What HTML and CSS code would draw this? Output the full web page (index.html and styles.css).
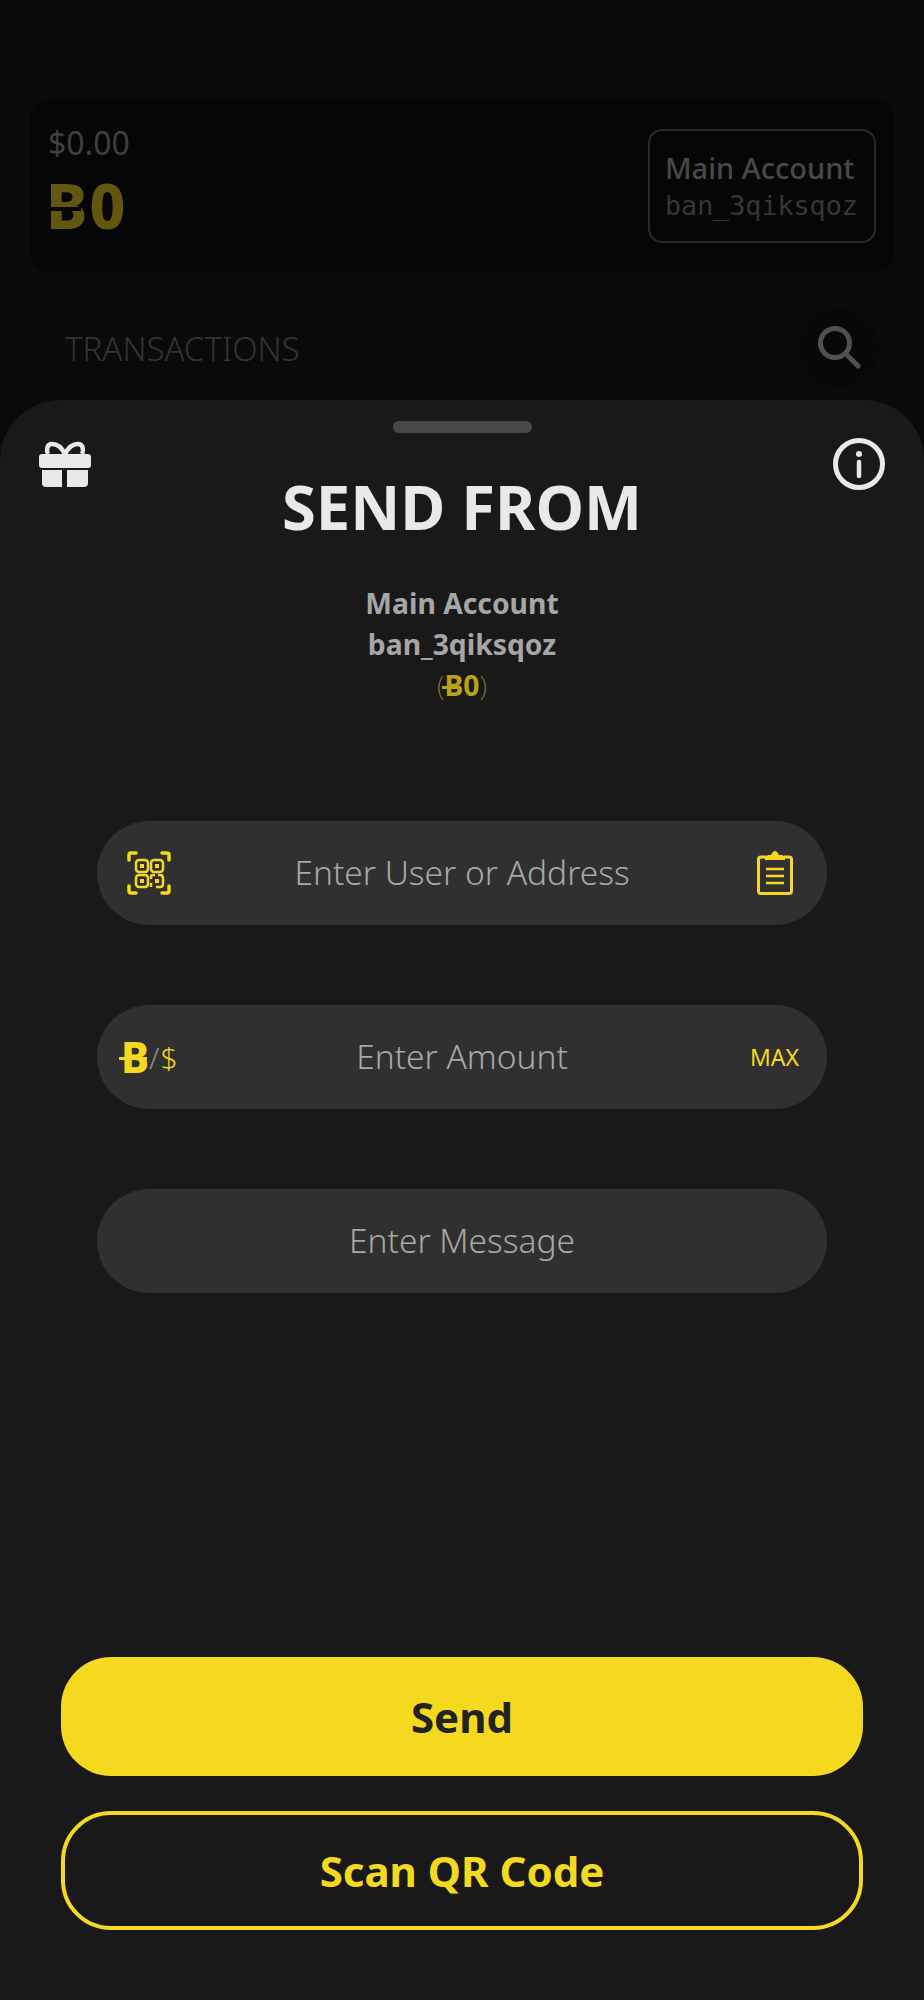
FILE: index.html
```html
<!DOCTYPE html>
<html lang="en">

<head>
    <title>Send</title>
    <meta charset="UTF-8">
    <meta name="viewport" content="width=device-width, initial-scale=1">
    <link rel="stylesheet" href="styles.css">
</head>

<body>
    <div class="home">
        <div class="balance-card">
            <div class="balance">
                <div class="fiat">$0.00</div>
                <div class="crypto"><span class="ban ban-cut">B</span>0</div>
            </div>
            <div class="account-box">
                <div class="account-name">Main Account</div>
                <div class="account-addr">ban_3qiksqoz</div>
            </div>
        </div>
        <div class="tx-header">
            <span class="tx-title">TRANSACTIONS</span>
            <div class="search-btn">
                <svg width="44" height="44" viewBox="0 0 44 44" fill="none" stroke="#505050" stroke-width="5" stroke-linecap="round">
                    <circle cx="18" cy="17" r="14.500"></circle>
                    <path d="M29 28 L41 40"></path>
                </svg>
            </div>
        </div>
    </div>

    <div class="sheet">
        <div class="handle"></div>
        <div class="sheet-head">
            <svg class="gift" width="52" height="48" viewBox="0 0 52 48" fill="#e9e9e9">
                <path d="M26 13 C22 5 17 3 13 3 C8 3 7 9 9 13 M26 13 C30 5 35 3 39 3 C44 3 45 9 43 13" fill="none" stroke="#e9e9e9" stroke-width="4.500"></path>
                <rect x="0" y="13" width="52" height="14" rx="3"></rect>
                <path d="M3 29 H23 V46 H7 Q3 46 3 42 Z"></path>
                <path d="M28 29 H49 V42 Q49 46 45 46 H28 Z"></path>
            </svg>
            <h1 class="sheet-title">SEND FROM</h1>
            <svg class="info" width="52" height="52" viewBox="0 0 52 52" fill="none" stroke="#e9e9e9">
                <circle cx="26" cy="26" r="23.500" stroke-width="5"></circle>
                <circle cx="26" cy="16" r="3" fill="#e9e9e9" stroke="none"></circle>
                <path d="M26 24 V38" stroke-width="4.500" stroke-linecap="round"></path>
            </svg>
        </div>
        <div class="from">
            <div>Main Account</div>
            <div>ban_3qiksqoz</div>
            <div class="from-bal">(<span class="from-amount"><span class="ban ban-line">B</span>0</span>)</div>
        </div>

        <div class="field field-first">
            <svg class="field-icon" width="44" height="44" viewBox="0 0 44 44" fill="none" stroke="#f5d91e" stroke-width="2.500">
                <path d="M2 9 V4 Q2 2 4 2 H9 M35 2 H40 Q42 2 42 4 V9 M42 35 V40 Q42 42 40 42 H35 M9 42 H4 Q2 42 2 40 V35" stroke-width="3.500" stroke-linecap="round"></path>
                <rect x="9" y="9" width="12" height="12" rx="3"></rect>
                <rect x="24" y="9" width="12" height="12" rx="3"></rect>
                <rect x="9" y="24" width="12" height="12" rx="3"></rect>
                <path d="M24 28 V26 Q24 24 26 24 H28 M31 24 H33 Q36 24 36 27 V33 Q36 36 33 36 H29 M24 32 V36"></path>
                <rect x="13" y="13" width="4" height="4" fill="#f5d91e" stroke="none"></rect>
                <rect x="28" y="13" width="4" height="4" fill="#f5d91e" stroke="none"></rect>
                <rect x="13" y="28" width="4" height="4" fill="#f5d91e" stroke="none"></rect>
                <rect x="28" y="28" width="4" height="4" fill="#f5d91e" stroke="none"></rect>
            </svg>
            <span class="placeholder">Enter User or Address</span>
            <svg class="clip-icon" width="36" height="44" viewBox="0 0 36 44" fill="none" stroke="#f5d91e" stroke-width="3">
                <path d="M9 6 H4 Q1.500 6 1.500 8.500 V40 Q1.500 42.500 4 42.500 H32 Q34.500 42.500 34.500 40 V8.500 Q34.500 6 32 6 H27"></path>
                <path d="M8 9 Q8 4 12 4 H14 Q16 0 18 0 Q20 0 22 4 H24 Q28 4 28 9 Z" fill="#f5d91e" stroke="none"></path>
                <path d="M9 18 H27 M9 25 H27 M9 32 H27" stroke-width="2.500"></path>
            </svg>
        </div>

        <div class="field">
            <div class="unit"><span class="ban ban-line unit-ban">B</span><span class="slash">/</span><span class="dollar">$</span></div>
            <span class="placeholder">Enter Amount</span>
            <span class="max">MAX</span>
        </div>

        <div class="field">
            <span class="placeholder">Enter Message</span>
        </div>

        <div class="actions">
            <button class="btn btn-send">Send</button>
            <button class="btn btn-scan">Scan QR Code</button>
        </div>
    </div>
</body>

</html>
```

FILE: styles.css
```css
* {
    padding: 0;
    margin: 0;
    box-sizing: border-box;
}

body {
    width: 924px;
    height: 2000px;
    overflow: hidden;
    background-color: #0a0a0a;
    font-family: "Noto Sans", sans-serif;
}

/* dimmed page behind the sheet */
.home {
    height: 400px;
    padding: 100px 30px 0;
}

.balance-card {
    display: flex;
    justify-content: space-between;
    align-items: flex-start;
    height: 172px;
    padding: 21px 18px 0;
    background-color: #060606;
    border-radius: 20px;
}

.fiat {
    font-size: 32px;
    line-height: 44px;
    color: #3f3f3f;
}

.crypto {
    font-size: 62px;
    line-height: 62px;
    font-weight: 800;
    letter-spacing: 2px;
    color: #635610;
    margin: 9px 0 0 -2px;
}

.ban {
    position: relative;
    display: inline-block;
}

.ban::after {
    content: "";
    position: absolute;
    left: -2px;
    right: 2px;
    top: 50%;
    height: 3px;
}

.ban-cut::after {
    background-color: #060606;
    height: 4px;
    right: 8px;
    left: 0;
    margin-top: 2px;
}

.ban-line::after {
    background-color: currentColor;
}

.account-box {
    width: 228px;
    height: 114px;
    margin-top: 8px;
    padding: 17px 0 0 15px;
    border: 2px solid #2a2a2a;
    border-radius: 14px;
}

.account-name {
    font-size: 29px;
    line-height: 40px;
    font-weight: 500;
    color: #484848;
    white-space: nowrap;
}

.account-addr {
    font-family: "DejaVu Sans Mono", monospace;
    font-size: 26.700px;
    line-height: 36px;
    font-weight: 300;
    color: #363636;
    white-space: nowrap;
}

.tx-header {
    display: flex;
    justify-content: space-between;
    align-items: center;
    height: 80px;
    margin-top: 36px;
    padding: 0 15px 0 35px;
}

.tx-title {
    font-size: 33px;
    font-weight: 300;
    color: #333333;
}

.search-btn {
    display: flex;
    align-items: center;
    justify-content: center;
    width: 80px;
    height: 80px;
    border-radius: 50%;
    background-color: #080808;
}

/* sheet */
.sheet {
    height: 1600px;
    padding-top: 21px;
    background-color: #191919;
    border-radius: 60px 60px 0 0;
}

.handle {
    width: 139px;
    height: 12px;
    margin: 0 auto;
    border-radius: 6px;
    background-color: #474747;
}

.sheet-head {
    display: grid;
    grid-template-columns: 1fr auto 1fr;
    align-items: start;
    padding: 5px 39px 0;
}

.gift {
    justify-self: start;
    margin-top: 3px;
}

.info {
    justify-self: end;
}

.sheet-title {
    margin-top: 27px;
    text-align: center;
    font-size: 61.500px;
    line-height: 82px;
    font-weight: 700;
    color: #e9e9e9;
}

.from {
    margin-top: 36px;
    text-align: center;
    font-size: 28.300px;
    line-height: 41px;
    font-weight: 700;
    color: #a6a6a6;
}

.from-bal {
    font-weight: 200;
    color: #8f7f1a;
}

.from-amount {
    font-weight: 700;
    color: #b8a21a;
}

.field {
    display: grid;
    grid-template-columns: 1fr auto 1fr;
    align-items: center;
    width: 730px;
    height: 104px;
    margin: 80px auto 0;
    padding: 0 24px;
    background-color: #303030;
    border-radius: 52px;
}

.field-first {
    margin-top: 115px;
}

.placeholder {
    grid-column: 2;
    margin-bottom: 3px;
    font-size: 33.500px;
    font-weight: 300;
    color: #a8a8a8;
}

.field-icon {
    margin-left: 6px;
}

.clip-icon {
    justify-self: end;
    margin-right: 10px;
}

.unit {
    display: flex;
    align-items: center;
    color: #f5d91e;
}

.unit-ban {
    font-size: 42px;
    font-weight: 800;
    line-height: 54px;
}

.slash {
    font-size: 30px;
    font-weight: 300;
    color: #8a8a8a;
}

.dollar {
    font-size: 30px;
    font-weight: 300;
    margin-left: 1px;
}

.max {
    justify-self: end;
    margin-right: 4px;
    font-size: 23px;
    line-height: 32px;
    color: #f5d91e;
}

.actions {
    display: flex;
    flex-direction: column;
    gap: 35px;
    margin: 364px 61px 0;
}

.btn {
    height: 119px;
    border-radius: 50px;
    font-family: "Noto Sans", sans-serif;
    font-size: 42px;
    font-weight: 700;
}

.btn-send {
    background-color: #f5d91e;
    border: none;
    color: #222222;
}

.btn-scan {
    background-color: transparent;
    border: 4px solid #f5d91e;
    color: #f5d91e;
}
```
